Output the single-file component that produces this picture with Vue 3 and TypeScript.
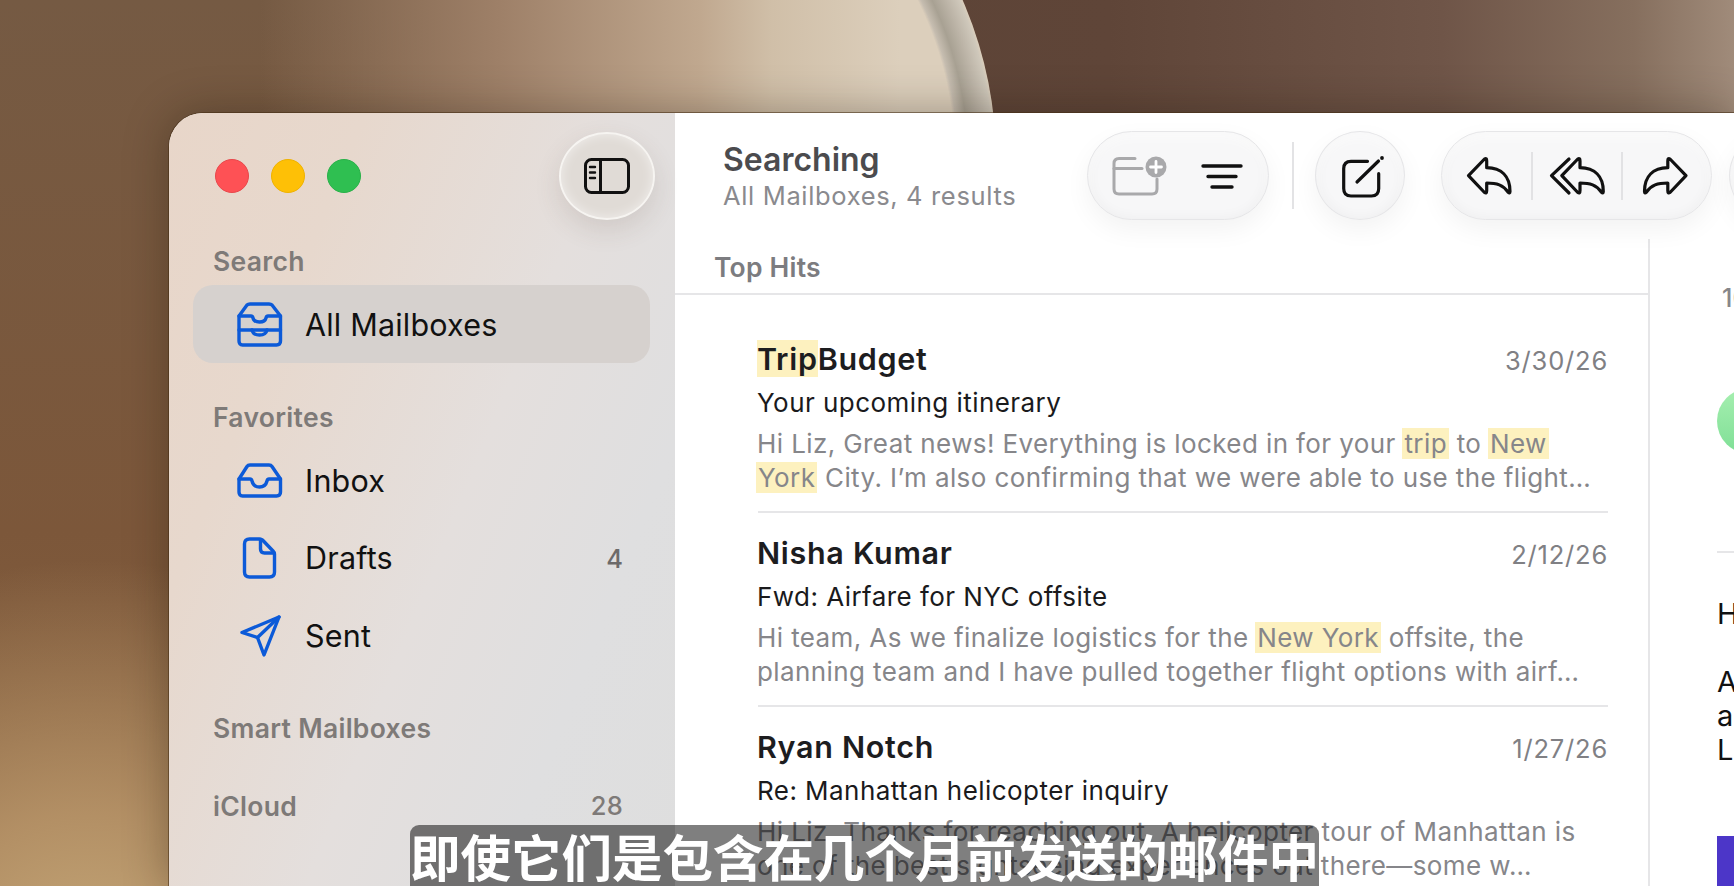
<script setup lang="ts">
interface Box { name: string; count?: string; w: number; h: number; paths: string[] }
interface Part { t: string; hl?: boolean }
interface Msg { from: Part[]; date: string; subject: string; lines: Part[][] }

const searchBoxes: Box[] = [
  {
    name: 'All Mailboxes', w: 47, h: 45,
    paths: [
      'M3 14 L11 3 Q12 2 14 2 H33 Q35 2 36 3 L44.5 14 V39 Q44.5 43 40.5 43 H6.5 Q3 43 3 39 Z',
      'M3 14 H15 Q16.5 14 17 16 Q18 20 23.5 20 Q29 20 30 16 Q30.5 14 32 14 H44.5',
      'M3 28 H44.5',
      'M16 28 Q17 33 23.5 33 Q30 33 31 28'
    ]
  }
]
const favorites: Box[] = [
  {
    name: 'Inbox', w: 47, h: 35,
    paths: [
      'M3 16 L11 3.5 Q12 2 14 2 H33 Q35 2 36 3.5 L44.5 16 V29 Q44.5 33 40.5 33 H6.5 Q3 33 3 29 Z',
      'M3 16 H14 Q15.5 16 16 18 Q17.5 24 23.5 24 Q29.5 24 31 18 Q31.5 16 33 16 H44.5'
    ]
  },
  {
    name: 'Drafts', count: '4', w: 47, h: 42,
    paths: [
      'M13.5 2 H23.5 Q25.5 2 26.5 3 L37.5 14.5 Q38.5 15.5 38.5 17 V35 Q38.5 40 33.5 40 H13.5 Q8.5 40 8.5 35 V7 Q8.5 2 13.5 2 Z',
      'M24.5 2.5 V12 Q24.5 16 28.5 16 H38'
    ]
  },
  {
    name: 'Sent', w: 47, h: 44,
    paths: ['M43 3 L6 18.5 L21.5 23.5 L28 41 Z', 'M43 3 L21.5 23.5']
  }
]
const messages: Msg[] = [
  {
    from: [{ t: 'Trip', hl: true }, { t: 'Budget' }],
    date: '3/30/26',
    subject: 'Your upcoming itinerary',
    lines: [
      [{ t: 'Hi Liz, Great news! Everything is locked in for your ' }, { t: 'trip', hl: true }, { t: ' to ' }, { t: 'New', hl: true }],
      [{ t: 'York', hl: true }, { t: ' City. I’m also confirming that we were able to use the flight…' }]
    ]
  },
  {
    from: [{ t: 'Nisha Kumar' }],
    date: '2/12/26',
    subject: 'Fwd: Airfare for NYC offsite',
    lines: [
      [{ t: 'Hi team, As we finalize logistics for the ' }, { t: 'New York', hl: true }, { t: ' offsite, the' }],
      [{ t: 'planning team and I have pulled together flight options with airf…' }]
    ]
  },
  {
    from: [{ t: 'Ryan Notch' }],
    date: '1/27/26',
    subject: 'Re: Manhattan helicopter inquiry',
    lines: [
      [{ t: 'Hi Liz, Thanks for reaching out. A helicopter tour of Manhattan is' }],
      [{ t: 'one of the best sightseeing experiences out there—some w…' }]
    ]
  }
]
const replyPath = 'M3.5 20.7 L19.5 4 Q21.7 2.5 21.7 6 V12.7 C36 13 45 21 45 36.5 Q45 39 43 37 C38 30 32 28 21.7 28 V35.5 Q21.7 39 19.5 37.5 Z'
</script>

<template>
  <div class="stage">
    <div class="disc"></div>
    <div class="window">
      <aside class="sidebar">
        <div class="titlebar">
          <span class="light red"></span>
          <span class="light yellow"></span>
          <span class="light green"></span>
          <button class="toggle">
            <svg width="48" height="38" viewBox="0 0 48 38" fill="none" stroke="#111" stroke-width="3" stroke-linecap="round">
              <rect x="2.5" y="2.5" width="43" height="33" rx="6" />
              <path d="M17.5 2.5 V35.5" />
              <path d="M7 10 H12 M7 15.5 H12 M7 21 H12" stroke-width="2.4" />
            </svg>
          </button>
        </div>

        <div class="section first">Search</div>
        <div v-for="b in searchBoxes" :key="b.name" class="row selected">
          <span class="ico">
            <svg :width="b.w" :height="b.h" :viewBox="`0 0 ${b.w} ${b.h}`" fill="none" stroke="#0c5ad8" stroke-width="3.4" stroke-linejoin="round" stroke-linecap="round">
              <path v-for="p in b.paths" :key="p" :d="p" />
            </svg>
          </span>
          <span class="name">{{ b.name }}</span>
        </div>

        <div class="section fav">Favorites</div>
        <div v-for="b in favorites" :key="b.name" class="row">
          <span class="ico">
            <svg :width="b.w" :height="b.h" :viewBox="`0 0 ${b.w} ${b.h}`" fill="none" stroke="#0c5ad8" stroke-width="3.4" stroke-linejoin="round" stroke-linecap="round">
              <path v-for="p in b.paths" :key="p" :d="p" />
            </svg>
          </span>
          <span class="name">{{ b.name }}</span>
          <span v-if="b.count" class="count">{{ b.count }}</span>
        </div>

        <div class="section smart">Smart Mailboxes</div>
        <div class="section cloud"><span>iCloud</span><span class="num">28</span></div>
      </aside>

      <main class="main">
        <header class="toolbar">
          <div class="heading">
            <div class="title">Searching</div>
            <div class="sub">All Mailboxes, 4 results</div>
          </div>
          <div class="pill pill-a">
            <svg width="56" height="41" viewBox="0 0 56 41" fill="none" stroke="#a9a9ab" stroke-width="3" stroke-linecap="round">
              <path d="M24 3.5 H8 Q3 3.5 3 8.5 V34 Q3 39 8 39 H41 Q46 39 46 34 V24" />
              <path d="M3 13.5 H31" />
              <circle cx="45" cy="12" r="10.5" fill="#a9a9ab" stroke="none" />
              <path d="M45 6.5 V17.5 M39.5 12 H50.5" stroke="#fff" stroke-width="2.8" />
            </svg>
            <svg width="42" height="26" viewBox="0 0 42 26" fill="none" stroke="#111" stroke-width="3.4" stroke-linecap="round">
              <path d="M2 3 H40 M7 13.5 H35 M11 24 H31" />
            </svg>
          </div>
          <span class="tsep"></span>
          <div class="pill pill-b">
            <svg width="44" height="43" viewBox="0 0 44 43" fill="none" stroke="#111" stroke-width="3.2" stroke-linecap="round">
              <path d="M26.5 6.3 H10 Q2.7 6.3 2.7 13.5 V33.5 Q2.7 41 10 41 H30.5 Q37.7 41 37.7 33.5 V18.7" />
              <path d="M16 27 L37.5 6" />
              <circle cx="41" cy="3" r="1.9" fill="#111" stroke="none" />
            </svg>
          </div>
          <div class="pill pill-c">
            <svg class="reply" width="48" height="42" viewBox="0 0 48 42" fill="none" stroke="#111" stroke-width="3.2" stroke-linejoin="round">
              <path :d="replyPath" />
            </svg>
            <span class="vsep vsep-1"></span>
            <svg class="replyall" width="58" height="42" viewBox="0 0 58 42" fill="none" stroke="#111" stroke-width="3.2" stroke-linejoin="round" stroke-linecap="round">
              <path d="M21 4 L3.5 20.7 L21 38" />
              <path :d="replyPath" transform="translate(10.3 0)" />
            </svg>
            <span class="vsep vsep-2"></span>
            <svg class="forward" width="48" height="42" viewBox="0 0 48 42" fill="none" stroke="#111" stroke-width="3.2" stroke-linejoin="round">
              <path :d="replyPath" transform="translate(47.5 0) scale(-1 1)" />
            </svg>
          </div>
          <div class="pill pill-d"></div>
        </header>

        <div class="panes">
          <section class="list">
            <div class="list-head">Top Hits</div>
            <article v-for="(m, i) in messages" :key="m.date" class="msg" :class="{ lead: i === 0 }">
              <div class="msg-top">
                <span class="from"><span v-for="(p, k) in m.from" :key="k" :class="{ hl: p.hl }">{{ p.t }}</span></span>
                <span class="date">{{ m.date }}</span>
              </div>
              <div class="subject">{{ m.subject }}</div>
              <div v-for="(line, n) in m.lines" :key="n" class="preview"><span v-for="(p, k) in line" :key="k" :class="{ hl: p.hl }">{{ p.t }}</span></div>
              <div v-if="i < messages.length - 1" class="rule"></div>
            </article>
          </section>
          <section class="detail">
            <div class="time">10:42 AM</div>
            <div class="avatar"></div>
            <div class="drule"></div>
            <p class="body hi">Hi Liz,</p>
            <p class="body para">As<br />a<br />Let</p>
            <div class="banner"></div>
          </section>
        </div>
      </main>
    </div>
    <div class="caption">即使它们是包含在几个月前发送的邮件中</div>
  </div>
</template>

<style>
html, body { margin: 0; overflow: hidden; }
</style>

<style scoped>
.stage {
  position: relative;
  width: 1734px;
  height: 886px;
  box-sizing: border-box;
  padding: 113px 0 0 169px;
  overflow: hidden;
  font-family: Inter, "Noto Sans", sans-serif;
  background:
    radial-gradient(circle 420px at 90px 980px, #c6a97a 0%, rgba(190, 155, 110, .8) 40%, rgba(150, 110, 70, 0) 100%),
    linear-gradient(180deg, #755a43 0%, #7c573a 60%, #86613f 100%);
}
.stage::before {
  content: "";
  position: absolute;
  left: 900px; right: 0; top: 0; height: 113px;
  background: linear-gradient(90deg, #5d4437 0%, #5f4538 25%, #6f5548 65%, #866f5e 88%, #a08b7a 100%);
}
.disc {
  position: absolute;
  left: 196px;
  top: -240px;
  width: 800px;
  height: 800px;
  border-radius: 50%;
  background: linear-gradient(90deg, rgba(124, 92, 66, 0) 8%, #9e8068 38%, #c0a88f 63%, #d0bfa8 72%, #dccfbc 88%);
}
.disc::after {
  content: "";
  position: absolute;
  inset: 0;
  border-radius: 50%;
  background: radial-gradient(circle closest-side, transparent 0, transparent 359px, #c6bdb0 362px, #a8a193 372px, #bdb5a8 385px, #cfc8bb 397px, rgba(200, 192, 180, 0) 400px);
  mask-image: linear-gradient(90deg, transparent 60%, #000 80%);
}
.window {
  position: relative;
  display: flex;
  width: 1565px;
  height: 773px;
  border-radius: 34px 0 0 0;
  overflow: hidden;
  background: #fff;
  box-shadow: 0 0 0 1px rgba(70, 45, 20, .55), 0 0 44px rgba(30, 20, 10, .35);
}
.sidebar {
  width: 506px;
  flex: none;
  box-sizing: border-box;
  padding: 19px 25px 0 24px;
  background:
    linear-gradient(112deg, #e8d6c9 0%, #e7d8cd 24%, #e4dfdd 55%, #dfdfe0 78%, #dedede 100%);
}
.titlebar {
  display: flex;
  align-items: center;
  gap: 22px;
  height: 88px;
  padding-left: 22px;
  margin-right: -5px;
}
.light { width: 34px; height: 34px; border-radius: 50%; box-sizing: border-box; }
.red { background: #fe5155; border: 1px solid #e8474b; }
.yellow { background: #fec006; border: 1px solid #efb200; }
.green { background: #2fbf51; border: 1px solid #29b149; }
.toggle {
  margin-left: auto;
  width: 96px;
  height: 88px;
  padding: 0;
  display: flex;
  align-items: center;
  justify-content: center;
  border-radius: 50%;
  border: 2px solid #f6f4f1;
  background: #e0dbd6;
  box-shadow: inset 0 0 12px rgba(255, 255, 255, .55), 0 10px 26px rgba(90, 70, 55, .14);
}
.section {
  display: flex;
  justify-content: space-between;
  padding: 0 27px 0 20px;
  height: 34px;
  line-height: 34px;
  font-size: 26.5px;
  font-weight: 600;
  letter-spacing: .3px;
  color: #7e7a78;
}
.first { margin: 24px 0 7px; }
.fav { margin: 37px 0 8px; }
.smart { margin-top: 36px; }
.cloud { margin-top: 44px; }
.num { font-weight: 500; font-size: 25.5px; }
.row {
  display: flex;
  align-items: center;
  height: 77.5px;
  padding: 0 27px 0 43px;
  border-radius: 20px;
}
.selected { background: #d6d1ce; height: 78px; }
.selected .name { padding-top: 2px; }
.ico { width: 47px; flex: none; display: flex; justify-content: center; }
.name {
  margin-left: 22px;
  font-size: 30.5px;
  letter-spacing: .2px;
  color: #111;
  line-height: 76px;
}
.count { margin-left: auto; font-size: 25.5px; font-weight: 500; color: #6c6a6a; }
.main { flex: 1; min-width: 0; display: flex; flex-direction: column; }
.toolbar {
  display: flex;
  align-items: flex-start;
  height: 126px;
  flex: none;
  padding: 18px 0 0 49px;
  box-sizing: border-box;
}
.heading { width: 363px; flex: none; }
.title {
  font-size: 32px;
  font-weight: 600;
  color: #4b4b4e;
  line-height: 40px;
  margin-top: 9px;
  margin-left: -1px;
}
.sub {
  font-size: 25.5px;
  color: #8a8a8e;
  line-height: 34px;
  margin-top: -1px;
  margin-left: -1px;
  letter-spacing: .65px;
  white-space: nowrap;
}
.pill {
  height: 89px;
  flex: none;
  box-sizing: border-box;
  border: 1.5px solid #e6e6e8;
  border-radius: 50%/50%;
  background: #f7f7f8;
  box-shadow: inset 0 0 14px rgba(0, 0, 0, .045), inset 0 6px 10px rgba(255, 255, 255, .9), 0 10px 26px rgba(0, 0, 0, .05);
  display: flex;
  align-items: center;
}
.pill-a { width: 182px; border-radius: 45px; padding-left: 23px; gap: 34px; }
.tsep { width: 2px; height: 67px; margin: 11px 21px 0 23px; background: #e3e3e5; flex: none; }
.pill-b { width: 90px; padding-left: 25px; padding-top: 2px; }
.pill-c { width: 271px; margin-left: 36px; border-radius: 45px; position: relative; }
.pill-c svg, .vsep { flex: none; }
.reply { margin-left: 23px; }
.vsep { width: 2px; height: 48px; background: #e2e2e4; }
.vsep-1 { margin-left: 18px; }
.vsep-2 { margin-left: 15px; }
.replyall { margin-left: 15px; }
.forward { margin-left: 19px; }
.pill-d { width: 90px; margin-left: 17px; }
.panes { flex: 1; min-height: 0; display: flex; }
.list { width: 973px; flex: none; border-right: 2px solid #e6e6e8; }
.list-head {
  height: 56px;
  line-height: 56px;
  padding-left: 39px;
  box-sizing: border-box;
  border-bottom: 2px solid #e6e6e8;
  font-size: 26.5px;
  font-weight: 600;
  letter-spacing: .2px;
  color: #7c7c80;
}
.msg { padding: 20px 40px 0 83px; }
.lead { padding-top: 44px; }
.msg-top { display: flex; justify-content: space-between; align-items: baseline; line-height: 40px; }
.from { font-size: 30.5px; font-weight: 600; letter-spacing: .7px; color: #1d1d1f; margin-left: -1px; }
.date { font-size: 25.5px; color: #808084; letter-spacing: .8px; }
.subject {
  margin-top: 4px;
  margin-bottom: 6px;
  margin-left: -1px;
  font-size: 26px;
  line-height: 36px;
  color: #1a1a1c;
  letter-spacing: .45px;
  white-space: nowrap;
}
.preview {
  margin-left: -1px;
  font-size: 26px;
  line-height: 34px;
  color: #86868a;
  white-space: nowrap;
  letter-spacing: .4px;
}
.hl { background: #fdf1bf; }
.preview .hl { padding: 0 2px; margin-left: -1px; }
.rule { height: 2px; margin-top: 16px; background: #e6e6e8; }
.detail {
  flex: 1;
  min-width: 0;
  overflow: hidden;
  padding-left: 67px;
  position: relative;
}
.time {
  margin-top: 44px;
  font-size: 25px;
  font-weight: 500;
  line-height: 30px;
  color: #86868a;
  white-space: nowrap;
  padding-left: 5px;
}
.avatar {
  margin-top: 75px;
  width: 66px;
  height: 66px;
  border-radius: 50%;
  background: linear-gradient(180deg, #a6efb0, #7fdf96);
}
.drule { height: 2px; margin-top: 97px; background: #e6e6e8; }
.body { margin: 0; font-size: 29px; line-height: 34px; color: #111; white-space: nowrap; }
.hi { margin-top: 43.5px; }
.para { margin-top: 34px; }
.banner { height: 60px; margin-top: 69px; background: #4c36c8; }
.caption {
  position: absolute;
  left: 410px;
  top: 825px;
  width: 909px;
  height: 70px;
  border-radius: 9px;
  background: rgba(0, 0, 0, .5);
  color: #fff;
  font-family: "Noto Sans CJK SC", "Noto Sans", sans-serif;
  font-size: 50.5px;
  font-weight: 700;
  line-height: 60px;
  text-align: center;
  white-space: nowrap;
}
</style>
